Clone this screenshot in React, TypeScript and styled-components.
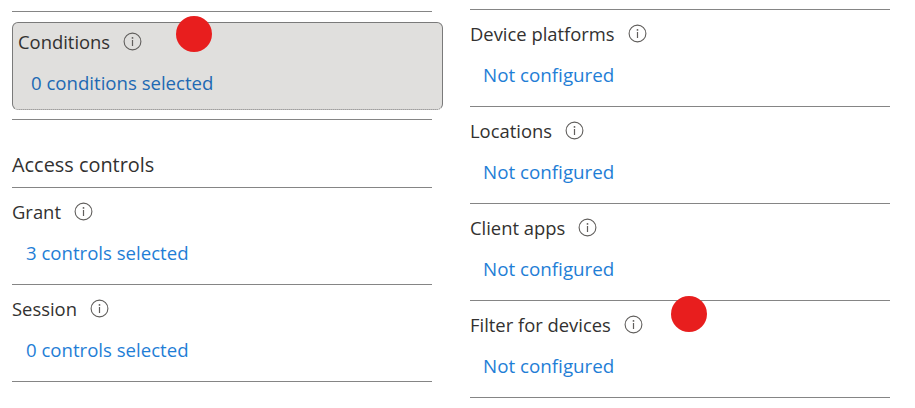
import React from "react";
import styled, { createGlobalStyle } from "styled-components";

const Global = createGlobalStyle`
  html, body { margin: 0; padding: 0; background: #fff; }
  body { font-family: "Open Sans", "Noto Sans", sans-serif; width: 915px; height: 408px; overflow: hidden; }
`;

const Page = styled.div`
  position: relative;
  width: 915px;
  height: 408px;
  display: flex;
  align-items: flex-start;
`;

const LeftColumn = styled.div`
  width: 431px;
  margin-left: 12px;
  padding-top: 11px;
  display: flex;
  flex-direction: column;
`;

const RightColumn = styled.div`
  width: 419px;
  margin-left: 27px;
  padding-top: 9px;
  display: flex;
  flex-direction: column;
`;

const Rule = styled.div`
  height: 1px;
  width: 420px;
  background: #858585;
`;

const Section = styled.div`
  width: 420px;
  height: 97px;
  box-sizing: border-box;
  border-top: 1px solid #858585;
  padding-top: 11px;
  &:last-child {
    height: 98px;
    border-bottom: 1px solid #858585;
  }
`;

const SelectedBox = styled.div`
  width: 431px;
  height: 88px;
  box-sizing: border-box;
  margin: 10px 0 9px;
  padding: 6px 0 0 5px;
  background: #e0dfdd;
  border: 1px solid #7a7a7a;
  border-bottom-style: dotted;
  border-radius: 6px;
`;

const Label = styled.div`
  display: flex;
  align-items: center;
  gap: 13px;
  height: 24px;
  font-size: 18.4px;
  color: #323130;
`;

const Value = styled.div<{ $dim?: boolean; $size: number; $indent: number }>`
  margin: 18px 0 0 ${(p) => p.$indent}px;
  height: 24px;
  line-height: 24px;
  font-size: ${(p) => p.$size}px;
  color: ${(p) => (p.$dim ? "#2169b3" : "#1f7ed6")};
`;

const Heading = styled.div`
  margin-top: 31px;
  height: 36px;
  font-size: 19.9px;
  line-height: 28px;
  color: #323130;
`;

const Dot = styled.div<{ $x: number; $y: number }>`
  position: absolute;
  left: ${(p) => p.$x}px;
  top: ${(p) => p.$y}px;
  width: 36px;
  height: 36px;
  border-radius: 50%;
  background: #e81e1e;
`;

const Info = () => (
  <svg width="19" height="19" viewBox="0 0 19 19" fill="none" aria-hidden="true">
    <circle cx="9.5" cy="9.5" r="8.4" stroke="#605e5c" strokeWidth="1.1" />
    <circle cx="9.5" cy="5.9" r="0.9" fill="#605e5c" />
    <rect x="8.9" y="8" width="1.2" height="6" fill="#605e5c" />
  </svg>
);

const Item = ({ label, value, size, indent }: { label: string; value: string; size: number; indent: number }) => (
  <Section>
    <Label>
      {label}
      <Info />
    </Label>
    <Value $size={size} $indent={indent}>{value}</Value>
  </Section>
);

export default function App() {
  return (
    <Page>
      <Global />
      <LeftColumn>
        <Rule />
        <SelectedBox>
          <Label>
            Conditions
            <Info />
          </Label>
          <Value $dim $size={18.6} $indent={13}>0 conditions selected</Value>
        </SelectedBox>
        <Rule />
        <Heading>Access controls</Heading>
        <Item label="Grant" value="3 controls selected" size={18.6} indent={14} />
        <Item label="Session" value="0 controls selected" size={18.6} indent={14} />
      </LeftColumn>
      <RightColumn>
        <Item label="Device platforms" value="Not configured" size={18.8} indent={13} />
        <Item label="Locations" value="Not configured" size={18.8} indent={13} />
        <Item label="Client apps" value="Not configured" size={18.8} indent={13} />
        <Item label="Filter for devices" value="Not configured" size={18.8} indent={13} />
      </RightColumn>
      <Dot $x={176} $y={16} />
      <Dot $x={671} $y={296} />
    </Page>
  );
}
